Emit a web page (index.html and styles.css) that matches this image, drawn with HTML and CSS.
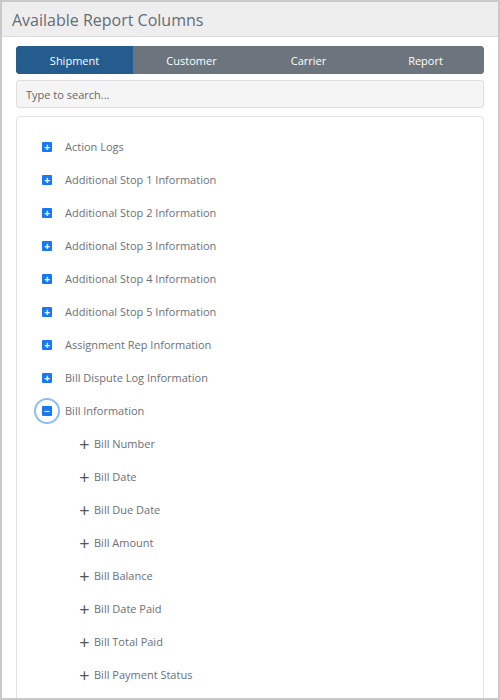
FILE: index.html
```html
<!DOCTYPE html>
<html lang="en">
<head>
    <meta charset="UTF-8">
    <meta name="viewport" content="width=device-width, initial-scale=1.0">
    <title>Available Report Columns</title>
    <link rel="stylesheet" href="styles.css">
</head>
<body>
    <div class="panel">
        <div class="panel-header">Available Report Columns</div>

        <div class="panel-body">
            <div class="tabs">
                <button class="tab active">Shipment</button>
                <button class="tab">Customer</button>
                <button class="tab">Carrier</button>
                <button class="tab">Report</button>
            </div>

            <input class="search" type="text" placeholder="Type to search...">

            <div class="tree">
                <div class="node"><span class="toggle">+</span>Action Logs</div>
                <div class="node"><span class="toggle">+</span>Additional Stop 1 Information</div>
                <div class="node"><span class="toggle">+</span>Additional Stop 2 Information</div>
                <div class="node"><span class="toggle">+</span>Additional Stop 3 Information</div>
                <div class="node"><span class="toggle">+</span>Additional Stop 4 Information</div>
                <div class="node"><span class="toggle">+</span>Additional Stop 5 Information</div>
                <div class="node"><span class="toggle">+</span>Assignment Rep Information</div>
                <div class="node"><span class="toggle">+</span>Bill Dispute Log Information</div>
                <div class="node open"><span class="toggle focus">&minus;</span>Bill Information</div>

                <div class="children">
                    <div class="leaf"><span class="add">+</span>Bill Number</div>
                    <div class="leaf"><span class="add">+</span>Bill Date</div>
                    <div class="leaf"><span class="add">+</span>Bill Due Date</div>
                    <div class="leaf"><span class="add">+</span>Bill Amount</div>
                    <div class="leaf"><span class="add">+</span>Bill Balance</div>
                    <div class="leaf"><span class="add">+</span>Bill Date Paid</div>
                    <div class="leaf"><span class="add">+</span>Bill Total Paid</div>
                    <div class="leaf"><span class="add">+</span>Bill Payment Status</div>
                </div>
            </div>
        </div>
    </div>
</body>
</html>
```

FILE: styles.css
```css
* {
    margin: 0;
    padding: 0;
    box-sizing: border-box;
}

body {
    width: 500px;
    height: 700px;
    overflow: hidden;
    font-family: 'Open Sans', 'Liberation Sans', sans-serif;
    color: #6c737b;
    background: #fff;
}

.panel {
    width: 500px;
    height: 700px;
    border: 2px solid #c9c9c9;
    overflow: hidden;
    background: #fff;
}

.panel-header {
    height: 35px;
    padding-left: 10px;
    line-height: 36px;
    font-size: 16px;
    color: #646c76;
    background: #eeeeee;
    border-bottom: 1px solid #dcdcdc;
}

.panel-body {
    padding: 9px 14px 0;
    display: flex;
    flex-direction: column;
}

.tabs {
    display: flex;
    height: 28px;
    border-radius: 4px;
    overflow: hidden;
    background: #6c757d;
}

.tab {
    flex: 1;
    border: none;
    background: #6c757d;
    color: #fff;
    font-family: inherit;
    font-size: 11px;
    cursor: pointer;
}

.tab.active {
    background: #255c8e;
}

.search {
    margin-top: 6px;
    height: 28px;
    padding: 0 9px;
    border: 1px solid #dedede;
    border-radius: 3px;
    background: #f5f5f5;
    font-family: inherit;
    font-size: 11px;
    color: #555;
}

.search::placeholder {
    color: #666;
}

.tree {
    margin-top: 8px;
    height: 620px;
    padding: 13px 0 0 25px;
    border: 1px solid #e2e2e2;
    border-radius: 4px;
}

.node, .leaf {
    display: flex;
    align-items: center;
    height: 33px;
    font-size: 11px;
    color: #6b7078;
}

.toggle {
    position: relative;
    width: 10px;
    height: 10px;
    margin-right: 13px;
    border-radius: 1px;
    background: #1877f2;
    color: #fff;
    font-size: 10px;
    font-weight: bold;
    line-height: 10px;
    text-align: center;
}

.toggle.focus::after {
    content: '';
    position: absolute;
    left: -8px;
    top: -8px;
    width: 22px;
    height: 22px;
    border: 2px solid #8dbdf3;
    border-radius: 50%;
}

.children {
    padding-left: 37px;
}

.add {
    width: 11px;
    margin-right: 4px;
    font-size: 18px;
    line-height: 1;
    color: #555;
    text-align: center;
}
```
